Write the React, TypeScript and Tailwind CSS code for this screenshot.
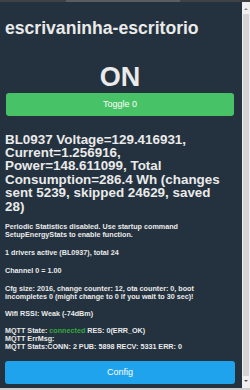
import React from "react";

export default function App() {
  return (
    <div className="w-[250px] h-[390px] overflow-hidden flex flex-col bg-[#24323f] font-['Liberation_Sans',Arial,sans-serif] text-[#eaeaea]">
      <div className="h-[2px] shrink-0 bg-[#3e4145] flex">
        <div className="ml-[66px] w-[114px] bg-[#5a5d61]" />
      </div>
      <div className="flex-1 flex min-h-0">
        <main className="flex-1 min-w-0 pl-[5px] pr-[7px]">
          <h1 className="mt-[15px] text-[17.6px] leading-[22px] font-bold whitespace-nowrap">
            escrivaninha-escritorio
          </h1>
          <div className="mt-[22px] text-[27px] leading-[32px] font-bold text-center">ON</div>
          <button className="ml-[1px] w-[228px] h-[23px] rounded-[3px] bg-[#47c266] text-white text-[9px] leading-[23px] block">
            Toggle 0
          </button>
          <div className="mt-[16.5px] text-[13.4px] leading-[13.4px] font-bold whitespace-nowrap">
            BL0937 Voltage=129.416931,
            <br />
            Current=1.256916,
            <br />
            Power=148.611099, Total
            <br />
            Consumption=286.4 Wh (changes
            <br />
            sent 5239, skipped 24629, saved
            <br />
            28)
          </div>
          <div className="text-[7.2px] leading-[8px] font-bold whitespace-nowrap">
            <p className="mt-[10px]">
              Periodic Statistics disabled. Use startup command
              <br />
              SetupEnergyStats to enable function.
            </p>
            <p className="mt-[10px]">1 drivers active (BL0937), total 24</p>
            <p className="mt-[10px]">Channel 0 = 1.00</p>
            <p className="mt-[10px]">
              Cfg size: 2016, change counter: 12, ota counter: 0, boot
              <br />
              incompletes 0 (might change to 0 if you wait to 30 sec)!
            </p>
            <p className="mt-[9px]">Wifi RSSI: Weak (-74dBm)</p>
            <p className="mt-[9px]">
              MQTT State: <span className="text-[#35a83c]">connected</span> RES: 0(ERR_OK)
              <br />
              MQTT ErrMsg:
              <br />
              MQTT Stats:CONN: 2 PUB: 5898 RECV: 5331 ERR: 0
            </p>
          </div>
          <button className="mt-[10px] w-full h-[23px] rounded-[3px] bg-[#1fa3ec] text-white text-[9px] leading-[23px] block">
            Config
          </button>
        </main>
        <div className="w-[8px] shrink-0 bg-[#f0f0f0] flex flex-col items-center">
          <svg width="8" height="10" viewBox="0 0 8 10" className="shrink-0 mt-[2px]">
            <path d="M2 6 L4 4 L6 6 Z" fill="#8a8a8a" />
          </svg>
          <div className="flex-1 w-[6px] bg-[#d4d4d4] rounded-[1px]" />
          <svg width="8" height="10" viewBox="0 0 8 10" className="shrink-0 mb-[2px]">
            <path d="M2 4 L4 6 L6 4 Z" fill="#505050" />
          </svg>
        </div>
      </div>
      <div className="h-[2px] shrink-0 bg-[#cfcfcf]" />
    </div>
  );
}
